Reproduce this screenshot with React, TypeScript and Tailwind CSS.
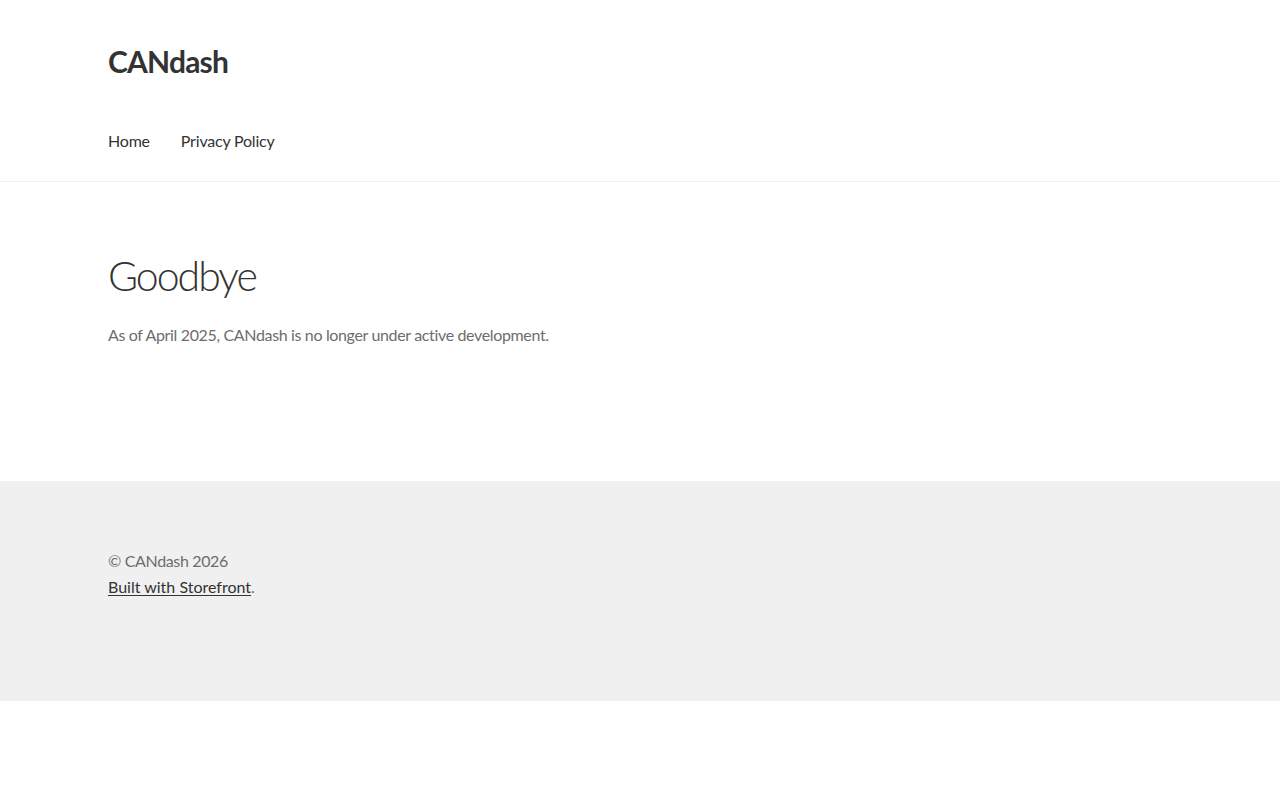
export default function App() {
  const font = { fontFamily: "Lato, 'Noto Sans', sans-serif" };
  return (
    <div className="min-h-[800px] bg-white" style={font}>
      <header className="h-[182px] border-b border-[#f0f0f0]">
        <div className="mx-auto max-w-[1064px] pt-[40px]">
          <div className="flex h-[42px] items-center">
            <a className="text-[30px] font-bold leading-none tracking-[-0.8px] text-[#333333]">
              CANdash
            </a>
          </div>
          <nav className="flex h-[99px] items-center gap-[31px] pt-[19px] text-[16px] tracking-[-0.2px] text-[#333333]">
            <a>Home</a>
            <a>Privacy Policy</a>
          </nav>
        </div>
      </header>

      <main className="h-[299px]">
        <div className="mx-auto max-w-[1064px] pt-[67px]">
          <h1 className="flex h-[52px] items-center text-[41px] font-light leading-none tracking-[-2px] text-[#333333]">
            Goodbye
          </h1>
          <p className="mt-[21px] text-[16px] leading-[26px] tracking-[-0.35px] text-[#6d6d6d]">
            As of April 2025, CANdash is no longer under active development.
          </p>
        </div>
      </main>

      <footer className="h-[220px] bg-[#f0f0f0]">
        <div className="mx-auto max-w-[1064px] pt-[67px] text-[16px] leading-[26px] text-[#6d6d6d]">
          <div className="tracking-[-0.35px]">© CANdash 2026</div>
          <div>
            <a className="text-[#333333] underline underline-offset-2">Built with Storefront</a>.
          </div>
        </div>
      </footer>
    </div>
  );
}
